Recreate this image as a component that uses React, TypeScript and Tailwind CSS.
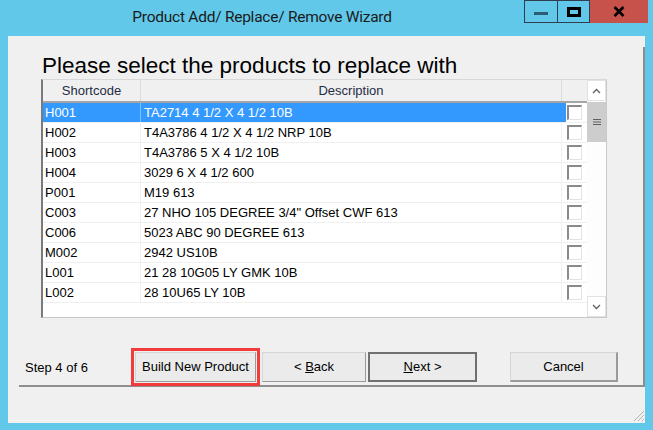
const rows = [
  { code: "H001", desc: "TA2714 4 1/2 X 4 1/2 10B" },
  { code: "H002", desc: "T4A3786 4 1/2 X 4 1/2 NRP 10B" },
  { code: "H003", desc: "T4A3786 5 X 4 1/2 10B" },
  { code: "H004", desc: "3029 6 X 4 1/2 600" },
  { code: "P001", desc: "M19 613" },
  { code: "C003", desc: '27 NHO 105 DEGREE 3/4" Offset CWF 613' },
  { code: "C006", desc: "5023 ABC 90 DEGREE 613" },
  { code: "M002", desc: "2942 US10B" },
  { code: "L001", desc: "21 28 10G05 LY GMK 10B" },
  { code: "L002", desc: "28 10U65 LY 10B" },
];

function CheckBox() {
  return (
    <div className="h-[15px] w-[15px] border-t-2 border-l-2 border-t-[#8a8a8a] border-l-[#8a8a8a] border-r border-b border-r-[#e3e3e3] border-b-[#e3e3e3] bg-white" />
  );
}

function ProductList() {
  return (
    <div className="flex h-[239px] w-[566px] border-l-2 border-t border-l-[#7a7a7a] border-t-[#d8d8d8] border-r border-b border-r-[#c8c8c8] border-b-[#c8c8c8] bg-white">
      <div className="flex flex-1 flex-col">
        <div className="flex h-[23px] border-b-2 border-[#a5a5a5] bg-[#f0f0f0] text-[13px] text-[#1e2d45]">
          <div className="flex w-[98px] items-center justify-center border-r border-[#dcdcdc]">Shortcode</div>
          <div className="flex w-[421px] items-center justify-center border-r border-[#dcdcdc]">Description</div>
          <div className="flex-1" />
        </div>
        {rows.map((r, i) => {
          const sel = i === 0;
          return (
            <div
              key={r.code}
              className={`flex h-[20px] border-b border-[#f0f0f0] text-[13px] ${sel ? "text-white" : "text-black"}`}
            >
              <div className={`flex w-[98px] items-center pl-[2px] border-r ${sel ? "bg-[#3399ff] border-[#7fbfff]" : "border-[#f0f0f0]"}`}>
                {r.code}
              </div>
              <div className={`flex w-[421px] items-center pl-[3px] ${sel ? "bg-[#3399ff]" : "border-r border-[#f0f0f0]"}`}>
                {r.desc}
              </div>
              <div className="flex flex-1 items-center">
                <div className={`h-full w-[4px] ${sel ? "bg-[#3399ff]" : ""}`} />
                <div className="pl-px">
                  <CheckBox />
                </div>
              </div>
            </div>
          );
        })}
      </div>
      <div className="flex w-[19px] flex-col bg-[#fdfdfd]">
        <div className="flex h-[21px] items-center justify-center border border-[#e2e2e2] bg-white text-[#606060]">
          <svg width="9" height="6" viewBox="0 0 9 6">
            <path d="M1 5 L4.5 1.5 L8 5" fill="none" stroke="#606060" strokeWidth="1.3" />
          </svg>
        </div>
        <div className="mt-px flex h-[40px] items-center justify-center bg-[#cdcdcd]">
          <svg width="8" height="8" viewBox="0 0 8 8">
            <path d="M0 1.5 H8 M0 4 H8 M0 6.5 H8" stroke="#606060" strokeWidth="1" />
          </svg>
        </div>
        <div className="flex-1" />
        <div className="flex h-[21px] items-center justify-center border border-[#e2e2e2] bg-white">
          <svg width="9" height="6" viewBox="0 0 9 6">
            <path d="M1 1 L4.5 4.5 L8 1" fill="none" stroke="#606060" strokeWidth="1.3" />
          </svg>
        </div>
      </div>
    </div>
  );
}

export default function App() {
  return (
    <div
      className="flex h-[430px] w-[653px] flex-col overflow-hidden bg-[#61c8ea]"
      style={{ fontFamily: '"Liberation Sans", Arial, sans-serif' }}
    >
      <div className="flex h-[36px]">
        <div
          className="flex flex-1 justify-center pt-[6px] text-[15.5px] text-[#1b1b1b]"
          style={{ fontFamily: 'Roboto, "Noto Sans", sans-serif', letterSpacing: "-0.25px" }}
        >
          Product Add/ Replace/ Remove Wizard
        </div>
        <div className="mr-[5px] flex h-[23px]">
          <div className="flex w-[34px] items-end justify-center border border-[#2e3e4c] pb-[7px]">
            <div className="h-[3px] w-[14px] bg-[#2b5d73]" />
          </div>
          <div className="flex w-[32px] items-start justify-center border-y border-r border-[#2e3e4c] pt-[6px]">
            <div className="h-[10px] w-[14px] border-[3px] border-black" />
          </div>
          <div className="flex w-[58px] items-center justify-center bg-[#c7514b]">
            <svg width="12" height="11" viewBox="0 0 12 11">
              <path d="M1.5 1 L10.5 10 M10.5 1 L1.5 10" stroke="black" strokeWidth="2.6" />
            </svg>
          </div>
        </div>
      </div>
      <div className="mx-[8px] flex h-[387px] flex-col bg-[#f0f0f0]">
        <div className="ml-[11px] mt-[11px] flex h-[340px] flex-col border-r-2 border-b-2 border-[#8e8e8e]">
          <div className="ml-[23px] mt-[7px] h-[24px] text-[22.5px] leading-[24px] text-black">
            Please select the products to replace with
          </div>
          <div className="ml-[22px] mt-px">
            <ProductList />
          </div>
          <div className="mt-[30px] flex items-center text-[13px] text-black">
            <div className="ml-[6px] w-[106px] pt-[2px]">Step 4 of 6</div>
            <div className="border-[3px] border-[#f23b3b] px-px py-[1px]">
              <button className="h-[30px] w-[121px] border border-[#d5d5d5] border-r-[#9a9a9a] border-b-[#9a9a9a] bg-[#ebebeb]">
                Build New Product
              </button>
            </div>
            <button className="ml-[2px] h-[30px] w-[104px] border border-[#d5d5d5] border-r-[#9a9a9a] border-b-[#9a9a9a] bg-[#ebebeb]">
              &lt; <span className="underline">B</span>ack
            </button>
            <button className="ml-[2px] h-[30px] w-[109px] border-2 border-[#707070] bg-[#ebebeb]">
              <span className="underline">N</span>ext &gt;
            </button>
            <button className="ml-[33px] h-[30px] w-[108px] border border-[#d5d5d5] border-r-[#9a9a9a] border-b-[#9a9a9a] border-r-2 border-b-2 bg-[#ebebeb]">
              Cancel
            </button>
          </div>
        </div>
        <div className="flex flex-1 items-end justify-end pb-[1px]">
          <svg width="13" height="13" viewBox="0 0 13 13">
            <path d="M12 2 L2 12 M12 6 L6 12 M12 10 L10 12" stroke="#b4b4b4" strokeWidth="1" />
          </svg>
        </div>
      </div>
    </div>
  );
}
